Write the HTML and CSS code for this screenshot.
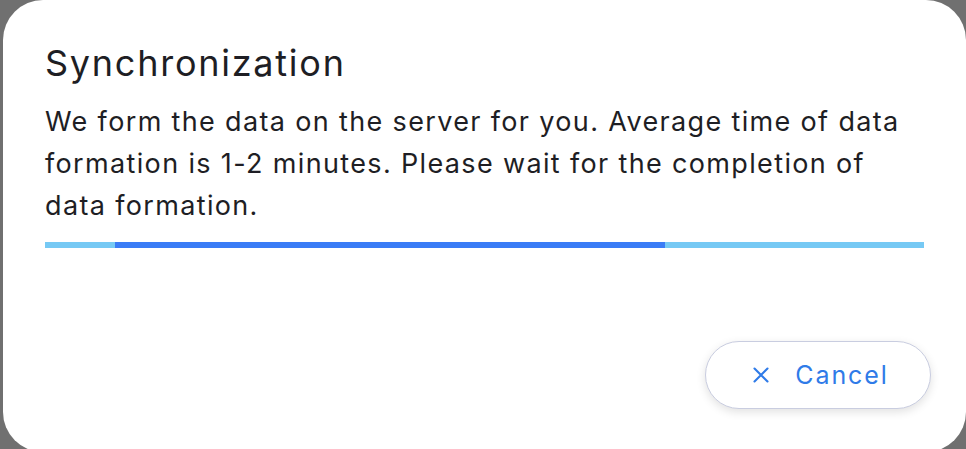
FILE: index.html
```html
<!DOCTYPE html>
<html>
<head>
<meta charset="utf-8">
<link rel="stylesheet" href="styles.css">
</head>
<body>
<div class="dialog">
  <h1 class="title">Synchronization</h1>
  <p class="text">We form the data on the server for you. Average time of data formation is 1-2 minutes. Please wait for the completion of data formation.</p>
  <div class="progress"><div class="bar"></div></div>
  <div class="actions">
    <button class="cancel">
      <svg width="16" height="16" viewBox="0 0 16 16"><path d="M1.5 1.5L14.5 14.5M14.5 1.5L1.5 14.5" stroke="#2f7be8" stroke-width="2.1" stroke-linecap="round" fill="none"/></svg>
      <span>Cancel</span>
    </button>
  </div>
</div>
</body>
</html>
```
FILE: styles.css
```css
html, body {
  margin: 0;
  padding: 0;
  background: #707070;
  overflow: hidden;
  height: 449px;
}
body {
  font-family: Inter, "Noto Sans", sans-serif;
}
.dialog {
  margin-left: 3px;
  width: 963px;
  height: 452px;
  box-sizing: border-box;
  background: #fff;
  border-radius: 40px;
  padding: 39px 42px 0 42px;
  display: flex;
  flex-direction: column;
}
.title {
  margin: 0;
  font-size: 36px;
  font-weight: 400;
  color: #1e1e24;
  line-height: 48px;
  letter-spacing: 1.75px;
}
.text {
  margin: 14px 0 0 0;
  width: 875px;
  font-size: 27px;
  line-height: 42px;
  color: #1e1e24;
  letter-spacing: 1.35px;
}
.progress {
  margin-top: 15px;
  width: 879px;
  height: 6px;
  background: #76c9f4;
  position: relative;
}
.bar {
  position: absolute;
  left: 70px;
  width: 550px;
  top: 0;
  bottom: 0;
  background: #3a7cf6;
}
.actions {
  display: flex;
  justify-content: flex-end;
  margin-top: 93px;
}
.cancel {
  width: 226px;
  height: 68px;
  border-radius: 34px;
  border: 1.5px solid #c9cde0;
  background: #fff;
  box-shadow: 0 3px 10px rgba(0,0,0,0.12);
  display: flex;
  align-items: center;
  justify-content: center;
  gap: 26px;
  font-family: Inter, sans-serif;
  font-size: 25px;
  color: #2f7be8;
  padding: 0 0 0 6px;
  margin-right: -7px;
  letter-spacing: 1.9px;
}
.cancel svg { display: block; }
```
